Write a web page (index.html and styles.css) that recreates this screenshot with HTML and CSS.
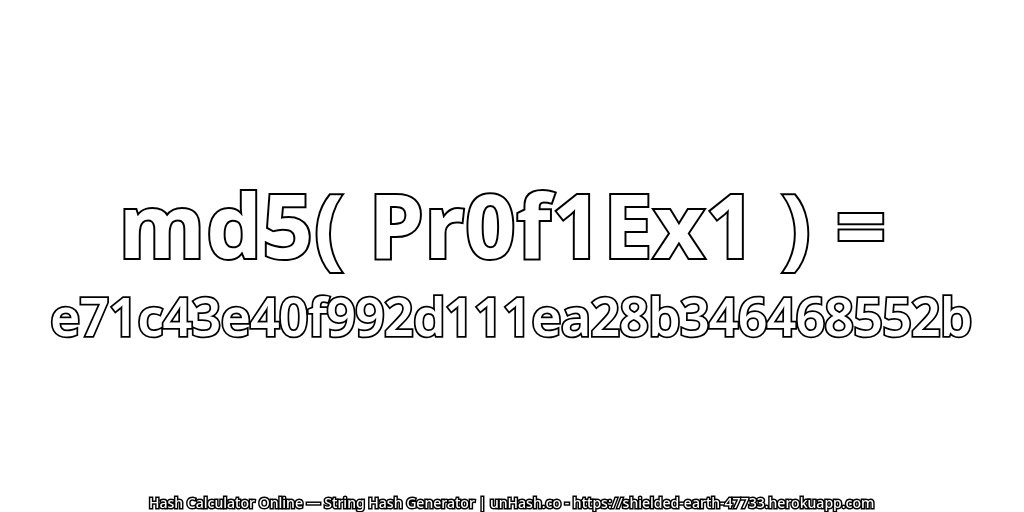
FILE: index.html
```html
<html lang="en">
<head>
    <meta charset="UTF-8">
    <title>md5( Pr0f1Ex1 ) = e71c43e40f992d111ea28b346468552b</title>
    <link rel="stylesheet" href="styles.css">
</head>
<body>
    <div class="page">
        <div class="hash">
            <h1 class="title">md5( Pr0f1Ex1 ) =</h1>
            <h2 class="result">e71c43e40f992d111ea28b346468552b</h2>
        </div>
        <div class="footer">Hash Calculator Online — String Hash Generator | unHash.co - https://shielded-earth-47733.herokuapp.com</div>
    </div>
</body>
</html>
```

FILE: styles.css
```css
body {
    margin: 0;
    background-color: white;
    font-family: "Noto Sans", "Open Sans", sans-serif;
}
.page {
    width: 1024px;
    height: 512px;
    display: flex;
    flex-direction: column;
    align-items: center;
    overflow: hidden;
}
.hash {
    flex: 1;
    display: flex;
    flex-direction: column;
    align-items: center;
    justify-content: center;
    padding-top: 24px;
}
.title {
    margin: 0;
    padding-right: 18px;
    font-size: 88px;
    line-height: 112px;
    font-weight: 700;
    letter-spacing: 1.1px;
    color: white;
    -webkit-text-stroke: 4px black;
    paint-order: stroke fill;
    white-space: nowrap;
    will-change: transform;
}
.result {
    margin: 0;
    padding-right: 2px;
    font-size: 52px;
    line-height: 71px;
    font-weight: 600;
    letter-spacing: -0.85px;
    color: white;
    -webkit-text-stroke: 3.5px black;
    paint-order: stroke fill;
    white-space: nowrap;
    will-change: transform;
}
.footer {
    font-size: 14.05px;
    line-height: 18px;
    color: white;
    font-weight: 500;
    -webkit-text-stroke: 3px black;
    paint-order: stroke fill;
    white-space: nowrap;
    will-change: transform;
}
```
